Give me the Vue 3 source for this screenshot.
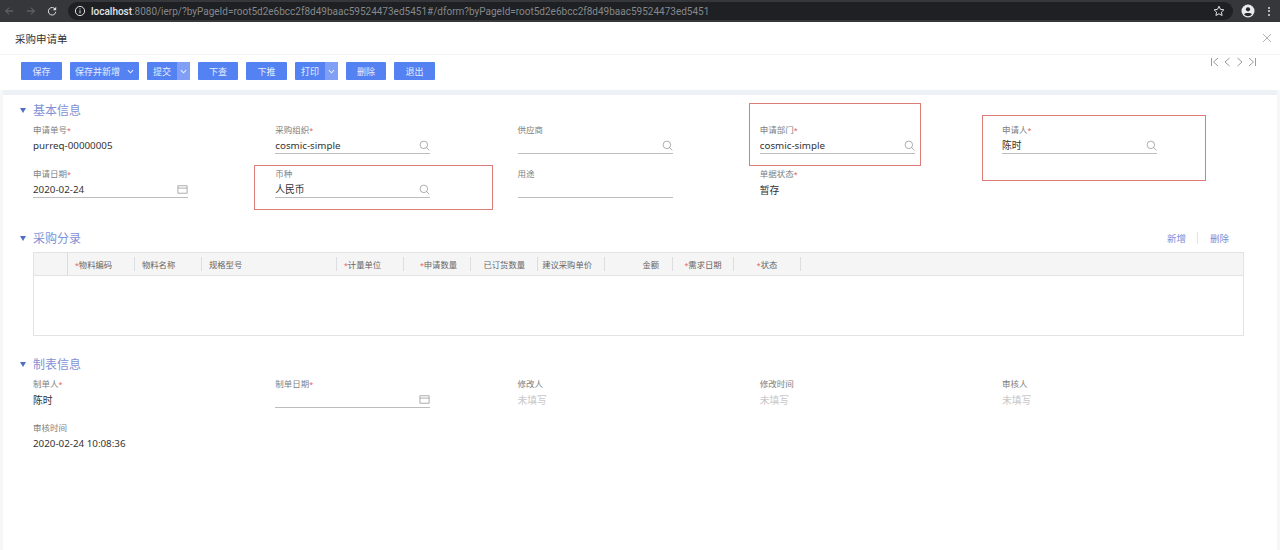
<template>
  <div class="page">
    <!-- 浏览器地址栏 -->
    <div class="browser-bar">
      <svg class="nav-icon" viewBox="0 0 12 12"><path d="M11 6H2M6 2L2 6l4 4" /></svg>
      <svg class="nav-icon forward" viewBox="0 0 12 12"><path d="M1 6h9M6 2l4 4-4 4" /></svg>
      <svg class="nav-icon reload" viewBox="0 0 12 12"><path d="M10 4a4.5 4.5 0 1 0 .6 3" /><path class="solid" d="M11 1v4H7z" /></svg>
      <div class="address">
        <svg class="info-icon" viewBox="0 0 12 12">
          <circle cx="6" cy="6" r="4.6" />
          <path d="M6 5.4v3M6 3.4v1" />
        </svg>
        <span class="url"><b>localhost</b>:8080/ierp/?byPageId=root5d2e6bcc2f8d49baac59524473ed5451#/dform?byPageId=root5d2e6bcc2f8d49baac59524473ed5451</span>
        <svg class="star-icon" viewBox="0 0 12 12"><path d="M6 1.2l1.5 3.2 3.4.4-2.5 2.3.7 3.4L6 8.8l-3.100 1.700.7-3.400L1.100 4.800l3.400-.4z" /></svg>
      </div>
      <svg class="account-icon" viewBox="0 0 14 14">
        <circle cx="7" cy="7" r="6.500" fill="#e8eaed" />
        <circle cx="7" cy="5.300" r="2.100" fill="#26282c" />
        <path d="M3 10.300c1-1.700 7-1.700 8 0a5 5 0 0 1-8 0z" fill="#26282c" />
      </svg>
      <div class="dots"><i></i><i></i><i></i></div>
    </div>

    <!-- 标题 -->
    <div class="title-row">
      <span class="bill-title">采购申请单</span>
      <svg class="close-icon" viewBox="0 0 10 10"><path d="M1 1l8 8M9 1l-8 8" /></svg>
    </div>

    <!-- 工具栏 -->
    <div class="toolbar">
      <div class="btn-group">
        <template v-for="btn in buttons" :key="btn.text">
          <button v-if="btn.split" class="btn split" :style="{ width: btn.width + 'px' }">
            <span class="split-text">{{ btn.text }}</span>
            <span class="split-arrow"><svg class="chevron" viewBox="0 0 8 5"><path d="M1 1l3 3 3-3" /></svg></span>
          </button>
          <button v-else class="btn" :style="{ width: btn.width + 'px' }">
            {{ btn.text }}
            <svg v-if="btn.arrow" class="chevron inline" viewBox="0 0 8 5"><path d="M1 1l3 3 3-3" /></svg>
          </button>
        </template>
      </div>
      <div class="pager">
        <svg viewBox="0 0 10 10"><path d="M1.500 1v8M8 1L3.500 5 8 9" /></svg>
        <svg viewBox="0 0 10 10"><path d="M7.500 1L3 5l4.500 4" /></svg>
        <svg viewBox="0 0 10 10"><path d="M2.500 1L7 5 2.500 9" /></svg>
        <svg viewBox="0 0 10 10"><path d="M8.500 1v8M2 1l4.500 4L2 9" /></svg>
      </div>
    </div>

    <div class="content">
      <!-- 基本信息 -->
      <div class="section first">
        <div class="section-head">
          <span class="triangle"></span>
          <span class="section-title">基本信息</span>
        </div>
        <div class="field-grid">
          <div v-for="f in baseFields" :key="f.label" class="field">
            <div class="field-label">{{ f.label }}<em v-if="f.required">*</em></div>
            <div class="field-value" :class="{ editable: f.icon }">
              <span class="value-text" :class="{ empty: f.empty }">{{ f.value }}</span>
              <svg v-if="f.icon === 'search'" class="field-icon" viewBox="0 0 12 12">
                <circle cx="5.300" cy="5.300" r="4.100" />
                <path d="M8.300 8.300l3 3" />
              </svg>
              <svg v-if="f.icon === 'date'" class="field-icon" viewBox="0 0 12 12">
                <rect x="1" y="2" width="10" height="8" />
                <path d="M1 4.500h10" />
              </svg>
            </div>
          </div>
        </div>
      </div>

      <!-- 采购分录 -->
      <div class="section entry">
        <div class="section-head">
          <span class="triangle"></span>
          <span class="section-title">采购分录</span>
          <div class="entry-actions">
            <span>新增</span>
            <i></i>
            <span>删除</span>
          </div>
        </div>
        <div class="table">
          <div class="table-head">
            <div class="cell first-cell"></div>
            <div
              v-for="col in columns"
              :key="col.text"
              class="cell"
              :class="col.align"
              :style="{ width: col.width + 'px' }"
            >
              <span><em v-if="col.required">*</em>{{ col.text }}</span>
            </div>
          </div>
        </div>
      </div>

      <!-- 制表信息 -->
      <div class="section maker">
        <div class="section-head">
          <span class="triangle"></span>
          <span class="section-title">制表信息</span>
        </div>
        <div class="field-grid">
          <div v-for="f in makerFields" :key="f.label" class="field">
            <div class="field-label">{{ f.label }}<em v-if="f.required">*</em></div>
            <div class="field-value" :class="{ editable: f.icon }">
              <span class="value-text" :class="{ empty: f.empty }">{{ f.value }}</span>
              <svg v-if="f.icon === 'date'" class="field-icon" viewBox="0 0 12 12">
                <rect x="1" y="2" width="10" height="8" />
                <path d="M1 4.500h10" />
              </svg>
            </div>
          </div>
        </div>
      </div>
    </div>

    <!-- 红色标注框 -->
    <div class="mark mark-dept"></div>
    <div class="mark mark-user"></div>
    <div class="mark mark-currency"></div>
  </div>
</template>

<script setup>
const buttons = [
  { text: '保存', width: 41 },
  { text: '保存并新增', width: 69, arrow: true },
  { text: '提交', width: 43, split: true },
  { text: '下查', width: 40 },
  { text: '下推', width: 41 },
  { text: '打印', width: 43, split: true },
  { text: '删除', width: 40 },
  { text: '退出', width: 41 },
]

const baseFields = [
  { label: '申请单号', required: true, value: 'purreq-00000005' },
  { label: '采购组织', required: true, value: 'cosmic-simple', icon: 'search' },
  { label: '供应商', value: '', icon: 'search' },
  { label: '申请部门', required: true, value: 'cosmic-simple', icon: 'search' },
  { label: '申请人', required: true, value: '陈时', icon: 'search' },
  { label: '申请日期', required: true, value: '2020-02-24', icon: 'date' },
  { label: '币种', value: '人民币', icon: 'search' },
  { label: '用途', value: '', icon: 'none' },
  { label: '单据状态', required: true, value: '暂存' },
]

const makerFields = [
  { label: '制单人', required: true, value: '陈时' },
  { label: '制单日期', required: true, value: '', icon: 'date' },
  { label: '修改人', value: '未填写', empty: true },
  { label: '修改时间', value: '未填写', empty: true },
  { label: '审核人', value: '未填写', empty: true },
  { label: '审核时间', value: '2020-02-24 10:08:36' },
]

const columns = [
  { text: '物料编码', width: 67, required: true, align: 'left' },
  { text: '物料名称', width: 67, align: 'left' },
  { text: '规格型号', width: 135, align: 'left' },
  { text: '计量单位', width: 67, required: true, align: 'left' },
  { text: '申请数量', width: 67, required: true, align: 'right' },
  { text: '已订货数量', width: 67, align: 'right' },
  { text: '建议采购单价', width: 67, align: 'right' },
  { text: '金额', width: 68, align: 'right' },
  { text: '需求日期', width: 61, required: true, align: 'center' },
  { text: '状态', width: 67, required: true, align: 'center' },
]
</script>

<style scoped>
.page {
  position: relative;
  width: 1280px;
  height: 550px;
  overflow: hidden;
  background: #fff;
  font-family: "Noto Sans", "Noto Sans CJK SC", sans-serif;
  color: #333;
}

.browser-bar {
  display: flex;
  align-items: center;
  height: 22px;
  padding-left: 4px;
  background: #35373a;
  box-sizing: border-box;
}

.nav-icon {
  width: 10px;
  height: 10px;
  margin-right: 12px;
  fill: none;
  stroke: #6f7275;
  stroke-width: 1.2;
}

.nav-icon.reload {
  stroke: #dfe1e3;
  margin-left: -1px;
  margin-right: 11px;
}

.nav-icon .solid {
  fill: #dfe1e3;
  stroke: none;
}

.address {
  display: flex;
  align-items: center;
  flex: 1;
  height: 18px;
  padding-left: 6px;
  border-radius: 9px;
  background: #1e2023;
}

.info-icon {
  width: 12px;
  height: 12px;
  margin-right: 5px;
  fill: none;
  stroke: #dfe1e3;
  stroke-width: 1;
}

.url {
  flex: 1;
  font-family: Roboto, sans-serif;
  font-size: 10px;
  color: #85888c;
  white-space: nowrap;
}

.url b {
  font-weight: 500;
  color: #e4e6e8;
}

.star-icon {
  width: 12px;
  height: 12px;
  margin-right: 8px;
  fill: none;
  stroke: #dfe1e3;
  stroke-width: 1;
}

.account-icon {
  width: 14px;
  height: 14px;
  margin-left: 8px;
}

.dots {
  display: flex;
  flex-direction: column;
  gap: 1.500px;
  margin: 0 10px 0 13px;
}

.dots i {
  width: 2px;
  height: 2px;
  border-radius: 50%;
  background: #dfe1e3;
}

.title-row {
  display: flex;
  align-items: center;
  justify-content: space-between;
  height: 33px;
  padding: 0 8px 0 15px;
  box-sizing: border-box;
  border-bottom: 1px solid #f4f5f6;
}

.bill-title {
  font-size: 10.500px;
  color: #333;
}

.close-icon {
  width: 10px;
  height: 10px;
  fill: none;
  stroke: #a6a8aa;
  stroke-width: 0.9;
}

.toolbar {
  display: flex;
  justify-content: space-between;
  height: 35px;
  padding: 7px 23px 0 21px;
  box-sizing: border-box;
}

.btn-group {
  display: flex;
  gap: 8px;
}

.btn {
  display: flex;
  align-items: center;
  justify-content: center;
  height: 18px;
  padding: 0;
  border: none;
  border-radius: 1px;
  background: #5582f3;
  color: #e6ecfd;
  font-family: inherit;
  font-size: 9px;
}

.btn.split {
  justify-content: flex-start;
  overflow: hidden;
}

.split-text {
  flex: 1;
  text-align: center;
}

.split-arrow {
  display: flex;
  align-items: center;
  justify-content: center;
  width: 13px;
  height: 100%;
  background: #81a0f5;
}

.chevron {
  width: 7px;
  height: 5px;
  fill: none;
  stroke: #e6ecfd;
  stroke-width: 1.2;
}

.chevron.inline {
  margin-left: 7px;
}

.pager {
  display: flex;
  gap: 2.500px;
  margin-top: -5px;
}

.pager svg {
  width: 10px;
  height: 10px;
  fill: none;
  stroke: #8e9092;
  stroke-width: 0.9;
}

.content {
  height: 460px;
  padding-top: 10px;
  box-sizing: border-box;
  background: linear-gradient(#edf1f5 5px, #fff 5px);
  border-left: 3px solid #f6f7f8;
  border-right: 3px solid #f6f7f8;
}

.section-head {
  display: flex;
  align-items: center;
  height: 20px;
  padding-left: 17px;
}

.triangle {
  width: 0;
  height: 0;
  margin-right: 7px;
  border-left: 3.500px solid transparent;
  border-right: 3.500px solid transparent;
  border-top: 5px solid #4f6fc7;
}

.section-title {
  font-size: 12px;
  color: #7f90d6;
}

.field-grid {
  display: grid;
  grid-template-columns: repeat(5, 242.250px);
  grid-auto-rows: 44px;
  margin-top: 3px;
  padding-left: 30px;
}

.field {
  width: 155px;
}

.field-label {
  height: 14px;
  font-size: 8.500px;
  line-height: 14px;
  color: #808080;
}

.field-label em,
.cell em {
  font-style: normal;
  font-size: 7px;
  color: #e0605c;
}

.field-value {
  display: flex;
  align-items: center;
  justify-content: space-between;
  height: 16px;
  padding-bottom: 1px;
  margin-top: 1px;
  box-sizing: border-box;
}

.field-value.editable {
  border-bottom: 1px solid #bcbdbf;
}

.value-text {
  font-size: 9.800px;
  color: #333;
  white-space: nowrap;
}

.value-text.empty {
  color: #c8c8c8;
}

.field-icon {
  width: 11px;
  height: 11px;
  fill: none;
  stroke: #8f9193;
  stroke-width: 0.8;
}

.entry {
  margin-top: 17px;
}

.entry .section-head {
  padding-right: 48px;
}

.entry-actions {
  display: flex;
  align-items: center;
  gap: 11.500px;
  margin-left: auto;
  font-size: 9.500px;
  color: #7b90d8;
}

.entry-actions i {
  width: 1px;
  height: 12px;
  background: #e4e5e7;
}

.table {
  width: 1211px;
  height: 84px;
  margin: 4px 0 0 30px;
  border: 1px solid #e2e3e5;
  box-sizing: border-box;
}

.table-head {
  display: flex;
  align-items: center;
  height: 23px;
  background: #f5f5f6;
  border-bottom: 1px solid #e2e3e5;
  box-sizing: border-box;
}

.cell {
  display: flex;
  align-items: center;
  flex: none;
  height: 14px;
  padding: 0 7px;
  box-sizing: border-box;
  border-right: 1px solid #dcdde0;
  font-size: 8.300px;
  color: #666;
  white-space: nowrap;
}

.first-cell {
  width: 34px;
  height: 100%;
}

.cell.left {
  justify-content: flex-start;
}

.cell.right {
  justify-content: flex-end;
  padding-right: 13px;
}

.cell.right:nth-child(7),
.cell.right:nth-child(8) {
  padding-right: 12px;
}

.cell.center {
  justify-content: center;
}

.maker {
  margin-top: 18px;
}

.mark {
  position: absolute;
  border: 1px solid #dc7c78;
  box-sizing: border-box;
}

.mark-dept {
  left: 749px;
  top: 103px;
  width: 172px;
  height: 63px;
}

.mark-user {
  left: 982px;
  top: 115px;
  width: 224px;
  height: 66px;
}

.mark-currency {
  left: 254px;
  top: 165px;
  width: 239px;
  height: 45px;
}
</style>
